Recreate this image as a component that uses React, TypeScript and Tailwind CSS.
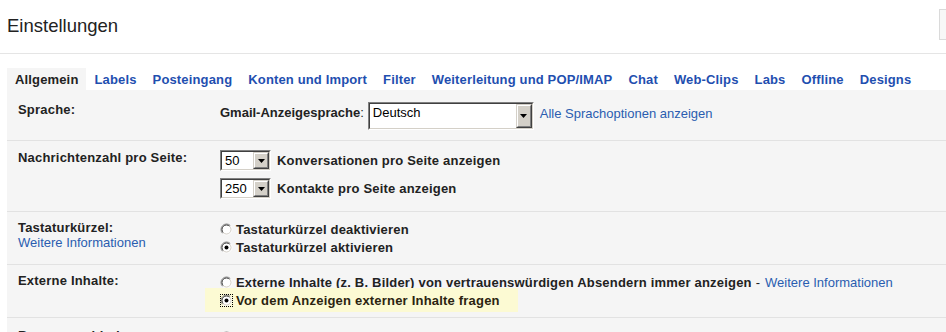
import type { ReactNode } from "react";

const TABS = [
  "Allgemein",
  "Labels",
  "Posteingang",
  "Konten und Import",
  "Filter",
  "Weiterleitung und POP/IMAP",
  "Chat",
  "Web-Clips",
  "Labs",
  "Offline",
  "Designs",
];

// bold labels run a little wider in the original rendering
function B({ children, className = "" }: { children: ReactNode; className?: string }) {
  return <b className={`font-bold tracking-[0.2px] ${className}`}>{children}</b>;
}

function Radio({ checked, focused }: { checked?: boolean; focused?: boolean }) {
  return (
    <svg
      viewBox="0 0 13 13"
      className={`w-[13px] h-[13px] shrink-0 ${focused ? "outline-1 outline-dotted outline-[#000] -outline-offset-1" : ""}`}
    >
      <circle cx="6.5" cy="6.5" r="4.5" fill="#fff" />
      <path d="M2.611 10.389A5.5 5.5 0 0 1 10.389 2.611" fill="none" stroke="#808080" />
      <path d="M3.318 9.682A4.5 4.5 0 0 1 9.682 3.318" fill="none" stroke="#404040" />
      <path d="M10.389 2.611A5.5 5.5 0 0 1 2.611 10.389" fill="none" stroke="#fff" />
      <path d="M9.682 3.318A4.5 4.5 0 0 1 3.318 9.682" fill="none" stroke="#d4d0c8" />
      {checked && <circle cx="6.5" cy="6.5" r="2" fill="#000" />}
    </svg>
  );
}

function Select({ value, size, tall }: { value: string; size: string; tall?: boolean }) {
  return (
    <div className={`flex shrink-0 border border-t-[#808080] border-l-[#808080] border-r-white border-b-white ${size}`}>
      <div className="flex flex-1 border border-t-[#404040] border-l-[#404040] border-r-[#d4d0c8] border-b-[#d4d0c8] bg-white">
        <span className={`flex-1 pl-[3px] text-black ${tall ? "pt-[1px]" : "self-center"}`}>{value}</span>
        <span className="flex w-[16px] border border-t-[#d4d0c8] border-l-[#d4d0c8] border-r-[#404040] border-b-[#404040]">
          <span className="flex flex-1 items-center justify-center bg-[#d4d0c8] border border-t-white border-l-white border-r-[#808080] border-b-[#808080]">
            <svg viewBox="0 0 7 4" className="w-[7px] h-[4px]">
              <polygon points="0,0 7,0 3.5,4" fill="#000" />
            </svg>
          </span>
        </span>
      </div>
    </div>
  );
}

function Row({ label, pt, pb, children }: { label: ReactNode; pt: string; pb: string; children: ReactNode }) {
  return (
    <div className={`flex pl-[11px] border-b border-[#e2e2e2] ${pt} ${pb}`}>
      <div className="w-[202px] shrink-0">{label}</div>
      <div className="flex flex-col">{children}</div>
    </div>
  );
}

function Option({ checked, children }: { checked?: boolean; children: ReactNode }) {
  return (
    <label className="flex items-center gap-[3px] h-[18px] whitespace-nowrap">
      <Radio checked={checked} />
      {children}
    </label>
  );
}

export default function App() {
  return (
    <div className="w-[946px] h-[332px] overflow-hidden bg-white font-['Liberation_Sans',Arial,sans-serif] text-[13px] leading-[15px] text-[#222]">
      <header className="flex items-start h-[54px] pt-[9px] pl-[7px] border-b border-[#e5e5e5]">
        <h1 className="mt-[6px] text-[18.5px] leading-[22px] font-normal text-[#222]">Einstellungen</h1>
        <div className="ml-auto mr-[-30px] w-[37px] h-[31px] border border-[#dadada] bg-[#f7f7f7]" />
      </header>

      <div className="pl-[7px] pt-[14px]">
        <nav className="flex h-[22px]">
          {TABS.map((t, i) => (
            <span
              key={t}
              className={`flex items-center px-[8px] font-bold tracking-[0.15px] whitespace-nowrap ${
                i === 0 ? "bg-[#f5f5f5] text-[#222]" : "text-[#1f4fb0]"
              }`}
            >
              {t}
            </span>
          ))}
        </nav>

        <div className="bg-[#f5f5f5]">
          <Row label={<B>Sprache:</B>} pt="pt-[12px]" pb="pb-[10px]">
            <div className="flex items-start">
              <span className="mt-[3px] whitespace-nowrap">
                <b className="font-bold">Gmail-Anzeigesprache</b>:
              </span>
              <span className="ml-[4px]">
                <Select value="Deutsch" size="w-[166px] h-[28px]" tall />
              </span>
              <a className="ml-[6px] mt-[4px] text-[#2a5db0] whitespace-nowrap">Alle Sprachoptionen anzeigen</a>
            </div>
          </Row>

          <Row label={<B>Nachrichtenzahl pro Seite:</B>} pt="pt-[9px]" pb="pb-[12px]">
            <div className="flex flex-col gap-[7px]">
              <div className="flex items-center gap-[6px] whitespace-nowrap">
                <Select value="50" size="w-[51px] h-[21px]" />
                <B>Konversationen pro Seite anzeigen</B>
              </div>
              <div className="flex items-center gap-[6px] whitespace-nowrap">
                <Select value="250" size="w-[51px] h-[21px]" />
                <B>Kontakte pro Seite anzeigen</B>
              </div>
            </div>
          </Row>

          <Row
            label={
              <>
                <B className="block">Tastaturkürzel:</B>
                <a className="text-[#2a5db0]">Weitere Informationen</a>
              </>
            }
            pt="pt-[8px]"
            pb="pb-[8px]"
          >
            <Option>
              <B>Tastaturkürzel deaktivieren</B>
            </Option>
            <Option checked>
              <B>Tastaturkürzel aktivieren</B>
            </Option>
          </Row>

          <Row label={<B>Externe Inhalte:</B>} pt="pt-[8px]" pb="pb-[8px]">
            <Option>
              <B>Externe Inhalte (z. B. Bilder) von vertrauenswürdigen Absendern immer anzeigen</B>
              <span className="ml-[1px]">-</span>
              <a className="ml-[2px] text-[#2a5db0]">Weitere Informationen</a>
            </Option>
            <div className="self-start flex items-center gap-[3px] h-[18px] box-content -ml-[15px] pl-[15px] pr-[18px] -my-[3px] py-[3px] bg-[#fcfad3] whitespace-nowrap">
              <Radio checked focused />
              <B className="text-[#2b2410]">Vor dem Anzeigen externer Inhalte fragen</B>
            </div>
          </Row>

          <Row label={<B>Browserverbindung:</B>} pt="pt-[10px]" pb="pb-[8px]">
            <Option>
              <B>Immer HTTPS verwenden</B>
            </Option>
            <Option checked>
              <B>HTTPS nicht immer verwenden</B>
            </Option>
          </Row>
        </div>
      </div>
    </div>
  );
}
